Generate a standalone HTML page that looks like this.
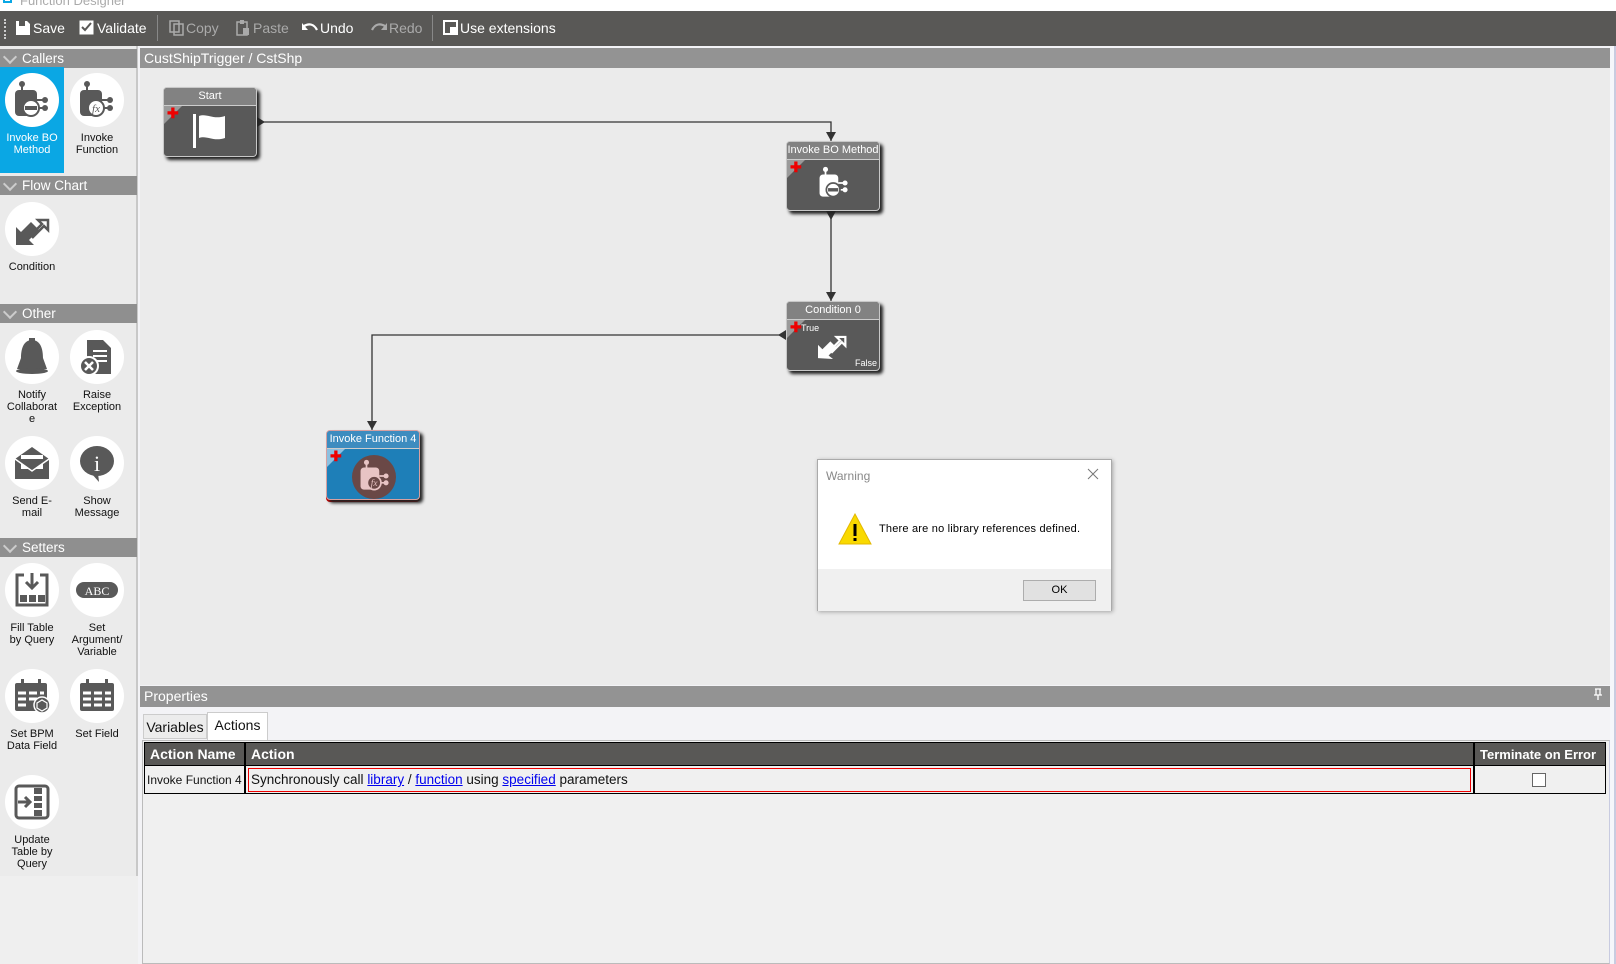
<!DOCTYPE html>
<html><head><meta charset="utf-8"><style>
*{margin:0;padding:0;box-sizing:border-box}
body{width:1616px;height:964px;overflow:hidden;background:#f3f3f6;font-family:"Liberation Sans",Arial,sans-serif;position:relative}
.a{position:absolute}
.tb{left:0;top:11px;width:1616px;height:35px;background:#595856}
.ti{position:absolute;top:20px;font-size:14px;color:#fff}
.ti.d{color:#aaa}
.sep{position:absolute;top:15px;width:1px;height:26px;background:#888}
.side{left:0;top:46px;width:138px;height:918px;background:#ebebeb;border-right:2px solid #c8c8c8}
.hd{position:absolute;left:0;width:137px;height:19px;background:#8f8f8f;color:#fff;font-size:13.5px;line-height:19px;padding-left:22px}
.hd:before{content:"";position:absolute;left:5px;top:3px;width:8px;height:8px;border-right:2.5px solid #ccc;border-bottom:2.5px solid #ccc;transform:rotate(45deg)}
.it{position:absolute;width:64px;text-align:center;font-size:11px;line-height:12px;color:#111}
.it .c{width:54px;height:54px;border-radius:50%;background:#fff;margin:0 auto 5px;display:flex;align-items:center;justify-content:center}
.node{position:absolute;width:94px;height:70px;background:#595959;border:1px solid #c8c8c8;border-radius:4px;box-shadow:3px 3px 3px #222}
.node .h{height:18px;background:#828282;border-radius:3px 3px 0 0;border-bottom:1px solid #ccc;color:#fff;font-size:11px;text-align:center;line-height:17px;white-space:nowrap;overflow:hidden}
.node .tri{position:absolute;left:0;top:18px;width:0;height:0;border-top:18px solid #9a9a9a;border-right:18px solid transparent}
.node .pl{position:absolute;left:3px;top:17px;color:#e00;font-weight:bold;font-size:14px}
</style></head><body>
<div class="a" style="left:0;top:0;width:1616px;height:11px;background:#fff;overflow:hidden"><span style="position:absolute;left:3px;top:-6px;width:9px;height:9px;border:2px solid #0aa7e4"></span><span style="position:absolute;left:20px;top:-7px;font-size:13px;color:#aaa">Function Designer</span></div>
<div class="a tb">
<div style="position:absolute;left:4px;top:8px;height:20px;border-left:2px dotted #ccc"></div>
</div>
<svg class="a" style="left:15px;top:20px" width="16" height="16"><path d="M1 1h11l3 3v11H1z" fill="#fff"/><rect x="4" y="1" width="6" height="5" fill="#595856"/></svg>
<span class="ti" style="left:33px">Save</span>
<svg class="a" style="left:79px;top:20px" width="15" height="15"><rect x="0.5" y="0.5" width="14" height="14" fill="#fff"/><path d="M3 7l3 3 6-7" stroke="#595856" stroke-width="2" fill="none"/></svg>
<span class="ti" style="left:97px">Validate</span>
<div class="sep" style="left:157px;top:15px"></div>
<svg class="a" style="left:169px;top:20px" width="15" height="16"><rect x="1" y="1" width="9" height="11" fill="none" stroke="#aaa" stroke-width="1.5"/><rect x="5" y="4" width="9" height="11" fill="none" stroke="#aaa" stroke-width="1.5"/></svg>
<span class="ti d" style="left:186px">Copy</span>
<svg class="a" style="left:236px;top:19px" width="14" height="17"><rect x="1" y="3" width="10" height="13" fill="none" stroke="#aaa" stroke-width="1.5"/><rect x="4" y="1" width="4" height="4" fill="#aaa"/><rect x="7" y="9" width="6" height="7" fill="#aaa"/></svg>
<span class="ti d" style="left:253px">Paste</span>
<svg class="a" style="left:302px;top:23px" width="16" height="10"><path d="M2 3c5-3 10-2 13 4" stroke="#fff" stroke-width="2.2" fill="none"/><path d="M0 0v7h6z" fill="#fff"/></svg>
<span class="ti" style="left:320px">Undo</span>
<svg class="a" style="left:371px;top:23px" width="16" height="10"><path d="M14 3c-5-3-10-2-13 4" stroke="#aaa" stroke-width="2.2" fill="none"/><path d="M16 0v7h-6z" fill="#aaa"/></svg>
<span class="ti d" style="left:389px">Redo</span>
<div class="sep" style="left:432px"></div>
<svg class="a" style="left:443px;top:20px" width="15" height="15"><rect x="1" y="1" width="13" height="13" fill="none" stroke="#fff" stroke-width="2"/><rect x="7" y="7" width="7" height="7" fill="#fff"/></svg>
<span class="ti" style="left:460px">Use extensions</span>

<div class="a side"></div>
<div class="hd" style="top:49px">Callers</div>
<div class="a" style="left:0;top:67px;width:64px;height:106px;background:#0aa7e4"></div>
<div class="it" style="left:0;top:73px;color:#fff"><div class="c"><svg width="40" height="40" viewBox="0 0 40 40"><circle cx="10" cy="4" r="3" fill="#595959"/><rect x="9" y="4" width="2" height="6" fill="#595959"/><rect x="3" y="10" width="22" height="26" rx="4" fill="#595959"/><path d="M25 20h6M25 28h6" stroke="#595959" stroke-width="2"/><circle cx="33" cy="20" r="3" fill="#595959"/><circle cx="33" cy="28" r="3" fill="#595959"/><circle cx="19" cy="28" r="8" fill="#fff" stroke="#595959" stroke-width="2"/><rect x="13" y="26" width="12" height="4" fill="#595959"/></svg></div>Invoke BO<br>Method</div>
<div class="it" style="left:65px;top:73px"><div class="c"><svg width="40" height="40" viewBox="0 0 40 40"><circle cx="10" cy="4" r="3" fill="#595959"/><rect x="9" y="4" width="2" height="6" fill="#595959"/><rect x="3" y="10" width="22" height="26" rx="4" fill="#595959"/><path d="M25 20h6M25 28h6" stroke="#595959" stroke-width="2"/><circle cx="33" cy="20" r="3" fill="#595959"/><circle cx="33" cy="28" r="3" fill="#595959"/><circle cx="19" cy="28" r="8" fill="#fff" stroke="#595959" stroke-width="2"/><text x="19" y="32" font-size="11" font-style="italic" text-anchor="middle" fill="#595959" font-family="Liberation Serif">fx</text></svg></div>Invoke<br>Function</div>

<div class="hd" style="top:176px">Flow Chart</div>
<div class="it" style="left:0;top:202px"><div class="c"><svg width="40" height="40" viewBox="0 0 40 40"><path d="M4 36V18l5 5 10-10 8 8-10 10 5 5z" fill="#595959"/><path d="M18 27l12-12-4-4h10v10l-4-4-12 12" fill="none" stroke="#595959" stroke-width="2.5"/></svg></div>Condition</div>

<div class="hd" style="top:304px">Other</div>
<div class="it" style="left:0;top:330px"><div class="c"><svg width="40" height="40" viewBox="0 0 40 40"><path d="M20 3c-9 0-11 10-11 18L5 32h30l-4-11c0-8-2-18-11-18z" fill="#595959"/><ellipse cx="20" cy="34" rx="16" ry="3" fill="#595959"/><rect x="17" y="1" width="6" height="4" fill="#595959"/></svg></div>Notify<br>Collaborat<br>e</div>
<div class="it" style="left:65px;top:330px"><div class="c"><svg width="40" height="40" viewBox="0 0 40 40"><path d="M10 3h16l8 8v26H10z" fill="#595959"/><path d="M16 14h14M16 19h14M16 24h14" stroke="#fff" stroke-width="2"/><circle cx="12" cy="29" r="9" fill="#595959" stroke="#fff" stroke-width="2"/><path d="M8 25l8 8M16 25l-8 8" stroke="#fff" stroke-width="2.5"/></svg></div>Raise<br>Exception</div>
<div class="it" style="left:0;top:436px"><div class="c"><svg width="40" height="40" viewBox="0 0 40 40"><path d="M3 16l17-12 17 12v20H3z" fill="#595959"/><rect x="9" y="12" width="22" height="14" fill="#fff"/><path d="M3 16l17 12 17-12" fill="#595959" stroke="#fff" stroke-width="1.5"/></svg></div>Send E-<br>mail</div>
<div class="it" style="left:65px;top:436px"><div class="c"><svg width="40" height="40" viewBox="0 0 40 40"><ellipse cx="20" cy="18" rx="17" ry="15" fill="#595959"/><path d="M14 30l8 9-1-9z" fill="#595959"/><text x="20" y="28" font-size="22" text-anchor="middle" fill="#fff" font-family="Liberation Serif">i</text></svg></div>Show<br>Message</div>

<div class="hd" style="top:538px">Setters</div>
<div class="it" style="left:0;top:563px"><div class="c"><svg width="40" height="40" viewBox="0 0 40 40"><path d="M12 5H5v30h30V5h-7" fill="none" stroke="#595959" stroke-width="3"/><path d="M20 3v14M14 12l6 6 6-6" stroke="#595959" stroke-width="3" fill="none"/><rect x="8" y="25" width="7" height="7" fill="#595959"/><rect x="17" y="25" width="7" height="7" fill="#595959"/><rect x="26" y="25" width="7" height="7" fill="#595959"/></svg></div>Fill Table<br>by Query</div>
<div class="it" style="left:65px;top:563px"><div class="c"><svg width="44" height="20" viewBox="0 0 44 20"><rect x="1" y="2" width="42" height="16" rx="8" fill="#595959"/><text x="22" y="15" font-size="12" text-anchor="middle" fill="#fff" font-family="Liberation Serif">ABC</text></svg></div>Set<br>Argument/<br>Variable</div>
<div class="it" style="left:0;top:669px"><div class="c"><svg width="40" height="40" viewBox="0 0 40 40"><rect x="3" y="7" width="32" height="28" rx="2" fill="#595959"/><rect x="9" y="3" width="3" height="8" fill="#595959"/><rect x="26" y="3" width="3" height="8" fill="#595959"/><path d="M6 17h8M17 17h8M28 17h4M6 23h8M17 23h8M6 29h8" stroke="#fff" stroke-width="3"/><circle cx="30" cy="29" r="8" fill="#595959" stroke="#fff" stroke-width="1.5"/><path d="M25 27l5-3 5 3v5l-5 3-5-3z" fill="none" stroke="#fff" stroke-width="1.2"/></svg></div>Set BPM<br>Data Field</div>
<div class="it" style="left:65px;top:669px"><div class="c"><svg width="40" height="40" viewBox="0 0 40 40"><rect x="3" y="7" width="34" height="28" rx="2" fill="#595959"/><rect x="9" y="3" width="3" height="8" fill="#595959"/><rect x="28" y="3" width="3" height="8" fill="#595959"/><path d="M6 17h8M17 17h8M28 17h6M6 23h8M17 23h8M28 23h6M6 29h8M17 29h8M28 29h6" stroke="#fff" stroke-width="3"/></svg></div>Set Field</div>
<div class="it" style="left:0;top:775px"><div class="c"><svg width="40" height="40" viewBox="0 0 40 40"><rect x="4" y="4" width="32" height="32" rx="3" fill="none" stroke="#595959" stroke-width="3"/><rect x="22" y="6" width="8" height="28" fill="#595959"/><path d="M22 13h8M22 20h8M22 27h8" stroke="#fff" stroke-width="2"/><path d="M6 20h12M13 15l5 5-5 5" stroke="#595959" stroke-width="3" fill="none"/></svg></div>Update<br>Table by<br>Query</div>
<div class="a" style="left:0;top:876px;width:138px;height:88px;background:#efefef"></div>

<div class="a" style="left:140px;top:48px;width:1470px;height:20px;background:#939393;color:#fff;font-size:14px;line-height:20px;padding-left:4px">CustShipTrigger / CstShp</div>
<div class="a" style="left:140px;top:68px;width:1470px;height:617px;background:#ebebeb"></div>
<div class="a" style="left:1610px;top:46px;width:6px;height:918px;background:#f5f6fb;border-right:2px solid #c8cbe0"></div>

<svg class="a" style="left:140px;top:68px" width="1470" height="617">
<g stroke="#333" stroke-width="1.3" fill="none">
<path d="M118 54H691V73"/><path d="M691 143V233"/><path d="M646 267H232V362"/></g>
<g fill="#333"><path d="M686 64h10l-5 9z"/><path d="M686 224h10l-5 9z"/><path d="M227 353h10l-5 9z"/><path d="M117 49v10l8-5z"/><path d="M686 143h10l-5 9z"/><path d="M646 262v10l-8-5z"/></g>
</svg>

<div class="node" style="left:163px;top:87px"><div class="h">Start</div><div class="tri"></div><span class="pl">✚</span>
<svg style="position:absolute;left:27px;top:24px" width="36" height="38"><rect x="2" y="2" width="3" height="34" fill="#fff"/><path d="M8 4c8-3 14 4 26 0v22c-12 4-18-3-26 0z" fill="#fff"/></svg></div>
<div class="node" style="left:786px;top:141px"><div class="h">Invoke BO Method</div><div class="tri"></div><span class="pl">✚</span>
<svg style="position:absolute;left:30px;top:24px" width="34" height="34" viewBox="0 0 40 40"><circle cx="10" cy="4" r="3" fill="#fff"/><rect x="9" y="4" width="2" height="6" fill="#fff"/><rect x="3" y="10" width="22" height="26" rx="4" fill="#fff"/><path d="M25 20h6M25 28h6" stroke="#fff" stroke-width="2"/><circle cx="33" cy="20" r="3" fill="#fff"/><circle cx="33" cy="28" r="3" fill="#fff"/><circle cx="19" cy="28" r="8" fill="#fff" stroke="#595959" stroke-width="2"/><rect x="13" y="26" width="12" height="4" fill="#595959"/></svg></div>
<div class="node" style="left:786px;top:301px"><div class="h">Condition 0</div><div class="tri"></div><span class="pl">✚</span>
<span style="position:absolute;left:14px;top:21px;color:#fff;font-size:9px">True</span><span style="position:absolute;right:2px;bottom:2px;color:#fff;font-size:9px">False</span>
<svg style="position:absolute;left:28px;top:27px" width="36" height="30" viewBox="0 0 40 34"><path d="M3 33V18l5 5 9-9 7 7-9 9 5 4z" fill="#fff"/><path d="M16 25l12-12-4-4h10v10l-4-4-12 12" fill="none" stroke="#fff" stroke-width="2.5"/></svg></div>
<div class="node" style="left:326px;top:430px;background:#1e7fb8;border-color:#d6a0a0;box-shadow:3px 3px 3px #222,0 2px 0 #c00"><div class="h" style="background:#3d8cbf">Invoke Function 4</div><div class="tri" style="border-top-color:#8cc0e0"></div><span class="pl">✚</span>
<div style="position:absolute;left:25px;top:24px;width:44px;height:44px;border-radius:50%;background:#6a4846"></div>
<svg style="position:absolute;left:31px;top:28px" width="34" height="34" viewBox="0 0 40 40"><circle cx="10" cy="4" r="3" fill="#e8c4c4"/><rect x="9" y="4" width="2" height="6" fill="#e8c4c4"/><rect x="3" y="10" width="22" height="26" rx="4" fill="#e8c4c4"/><path d="M25 20h6M25 28h6" stroke="#e8c4c4" stroke-width="2"/><circle cx="33" cy="20" r="3" fill="#e8c4c4"/><circle cx="33" cy="28" r="3" fill="#e8c4c4"/><circle cx="19" cy="28" r="8" fill="#6a4846" stroke="#e8c4c4" stroke-width="2"/><text x="19" y="32" font-size="11" font-style="italic" text-anchor="middle" fill="#e8c4c4" font-family="Liberation Serif">fx</text></svg></div>

<div class="a" style="left:817px;top:459px;width:295px;height:152px;background:#fff;border:1px solid #aaa;box-shadow:1px 1px 4px rgba(0,0,0,.3)">
<span style="position:absolute;left:8px;top:9px;font-size:12px;color:#888">Warning</span>
<svg style="position:absolute;right:12px;top:8px" width="12" height="12"><path d="M1 1l10 10M11 1L1 11" stroke="#777" stroke-width="1"/></svg>
<svg style="position:absolute;left:20px;top:53px" width="34" height="32"><path d="M17 1L33 31H1z" fill="#f9d900" stroke="#e3b800"/><rect x="15.5" y="11" width="3" height="12" fill="#000"/><rect x="15.5" y="25" width="3" height="3" fill="#000"/></svg>
<span style="position:absolute;left:61px;top:63px;font-size:11px;color:#000;font-family:'Liberation Sans',sans-serif;letter-spacing:.2px">There are no library references defined.</span>
<div style="position:absolute;left:0;top:109px;width:293px;height:42px;background:#f0f0f0"></div>
<div style="position:absolute;left:205px;top:120px;width:73px;height:21px;background:#e1e1e1;border:1px solid #adadad;text-align:center;font-size:11px;line-height:19px">OK</div>
</div>

<div class="a" style="left:140px;top:686px;width:1470px;height:21px;background:#939393;color:#fff;font-size:14px;line-height:21px;padding-left:4px">Properties</div>
<svg class="a" style="left:1594px;top:688px" width="8" height="12"><path d="M1 1h6M2 1v6h4V1M0 7h8M4 7v5" stroke="#fff" stroke-width="1.3" fill="none"/></svg>
<div class="a" style="left:143px;top:714px;width:64px;height:25px;background:#ececec;border:1px solid #ccc;font-size:14px;line-height:24px;text-align:center;color:#111">Variables</div>
<div class="a" style="left:207px;top:712px;width:61px;height:29px;background:#fff;border:1px solid #ccc;border-bottom:none;font-size:14px;line-height:25px;text-align:center;color:#111">Actions</div>
<div class="a" style="left:142px;top:740px;width:1468px;height:224px;background:#f0f0f0;border:1px solid #bbb;border-right-color:#c8cbe0"></div>
<div class="a" style="left:144px;top:742px;width:1462px;height:24px;background:#595856;border:1px solid #000"></div>
<div class="a" style="left:244px;top:742px;width:2px;height:52px;background:#000"></div>
<div class="a" style="left:1473px;top:742px;width:2px;height:52px;background:#000"></div>
<span class="a" style="left:150px;top:746px;color:#fff;font-weight:bold;font-size:14px">Action Name</span>
<span class="a" style="left:251px;top:746px;color:#fff;font-weight:bold;font-size:14px">Action</span>
<span class="a" style="left:1480px;top:747px;color:#fff;font-weight:bold;font-size:13px">Terminate on Error</span>
<div class="a" style="left:144px;top:766px;width:1462px;height:28px;border:1px solid #000;border-top:none"></div>
<span class="a" style="left:147px;top:773px;font-size:12px;color:#111">Invoke Function 4</span>
<div class="a" style="left:248px;top:768px;width:1223px;height:24px;border:1.5px solid #e00"></div>
<span class="a" style="left:251px;top:772px;font-size:13.5px;color:#111">Synchronously call <u style="color:#0000ee">library</u> / <u style="color:#0000ee">function</u> using <u style="color:#0000ee">specified</u> parameters</span>
<div class="a" style="left:1532px;top:773px;width:14px;height:14px;background:#fff;border:1px solid #666"></div>
</body></html>
